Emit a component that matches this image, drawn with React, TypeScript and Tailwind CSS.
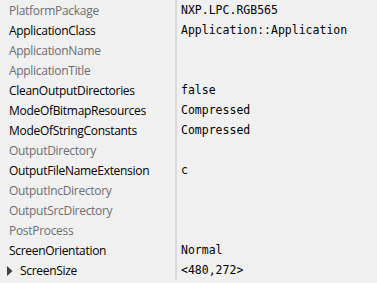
import React from "react";

type Row = { name: string; value?: string; active: boolean; expand?: boolean };

const rows: Row[] = [
  { name: "PlatformPackage", value: "NXP.LPC.RGB565", active: false },
  { name: "ApplicationClass", value: "Application::Application", active: true },
  { name: "ApplicationName", active: false },
  { name: "ApplicationTitle", active: false },
  { name: "CleanOutputDirectories", value: "false", active: true },
  { name: "ModeOfBitmapResources", value: "Compressed", active: true },
  { name: "ModeOfStringConstants", value: "Compressed", active: true },
  { name: "OutputDirectory", active: false },
  { name: "OutputFileNameExtension", value: "c", active: true },
  { name: "OutputIncDirectory", active: false },
  { name: "OutputSrcDirectory", active: false },
  { name: "PostProcess", active: false },
  { name: "ScreenOrientation", value: "Normal", active: true },
  { name: "ScreenSize", value: "<480,272>", active: true, expand: true },
];

export default function App() {
  return (
    <div className="w-[377px] h-[283px] bg-[#f0f0f0] overflow-hidden">
      <div className="flex flex-col">
        {rows.map((r) => (
          <div key={r.name} className="flex h-[20px]">
            <div
              className={
                "w-[175px] shrink-0 flex items-center pt-[2px] text-[12px] font-['Open_Sans',sans-serif] tracking-[-0.3px] " +
                (r.active ? "text-[#000000]" : "text-[#6d6d72]") +
                (r.expand ? " pl-[7px]" : " pl-[9px]")
              }
            >
              {r.expand && (
                <svg width="6" height="10" viewBox="0 0 6 10" className="mr-[7px]">
                  <polygon points="0,0 5.5,5 0,10" fill="#404040" />
                </svg>
              )}
              <span>{r.name}</span>
            </div>
            <div className="w-[2px] h-full bg-[#dadada] shrink-0" />
            <div className="flex items-center pt-[2px] pl-[4px] text-[11.5px] text-[#000000] font-['DejaVu_Sans_Mono',monospace] whitespace-pre">
              {r.value ?? ""}
            </div>
          </div>
        ))}
      </div>
    </div>
  );
}
